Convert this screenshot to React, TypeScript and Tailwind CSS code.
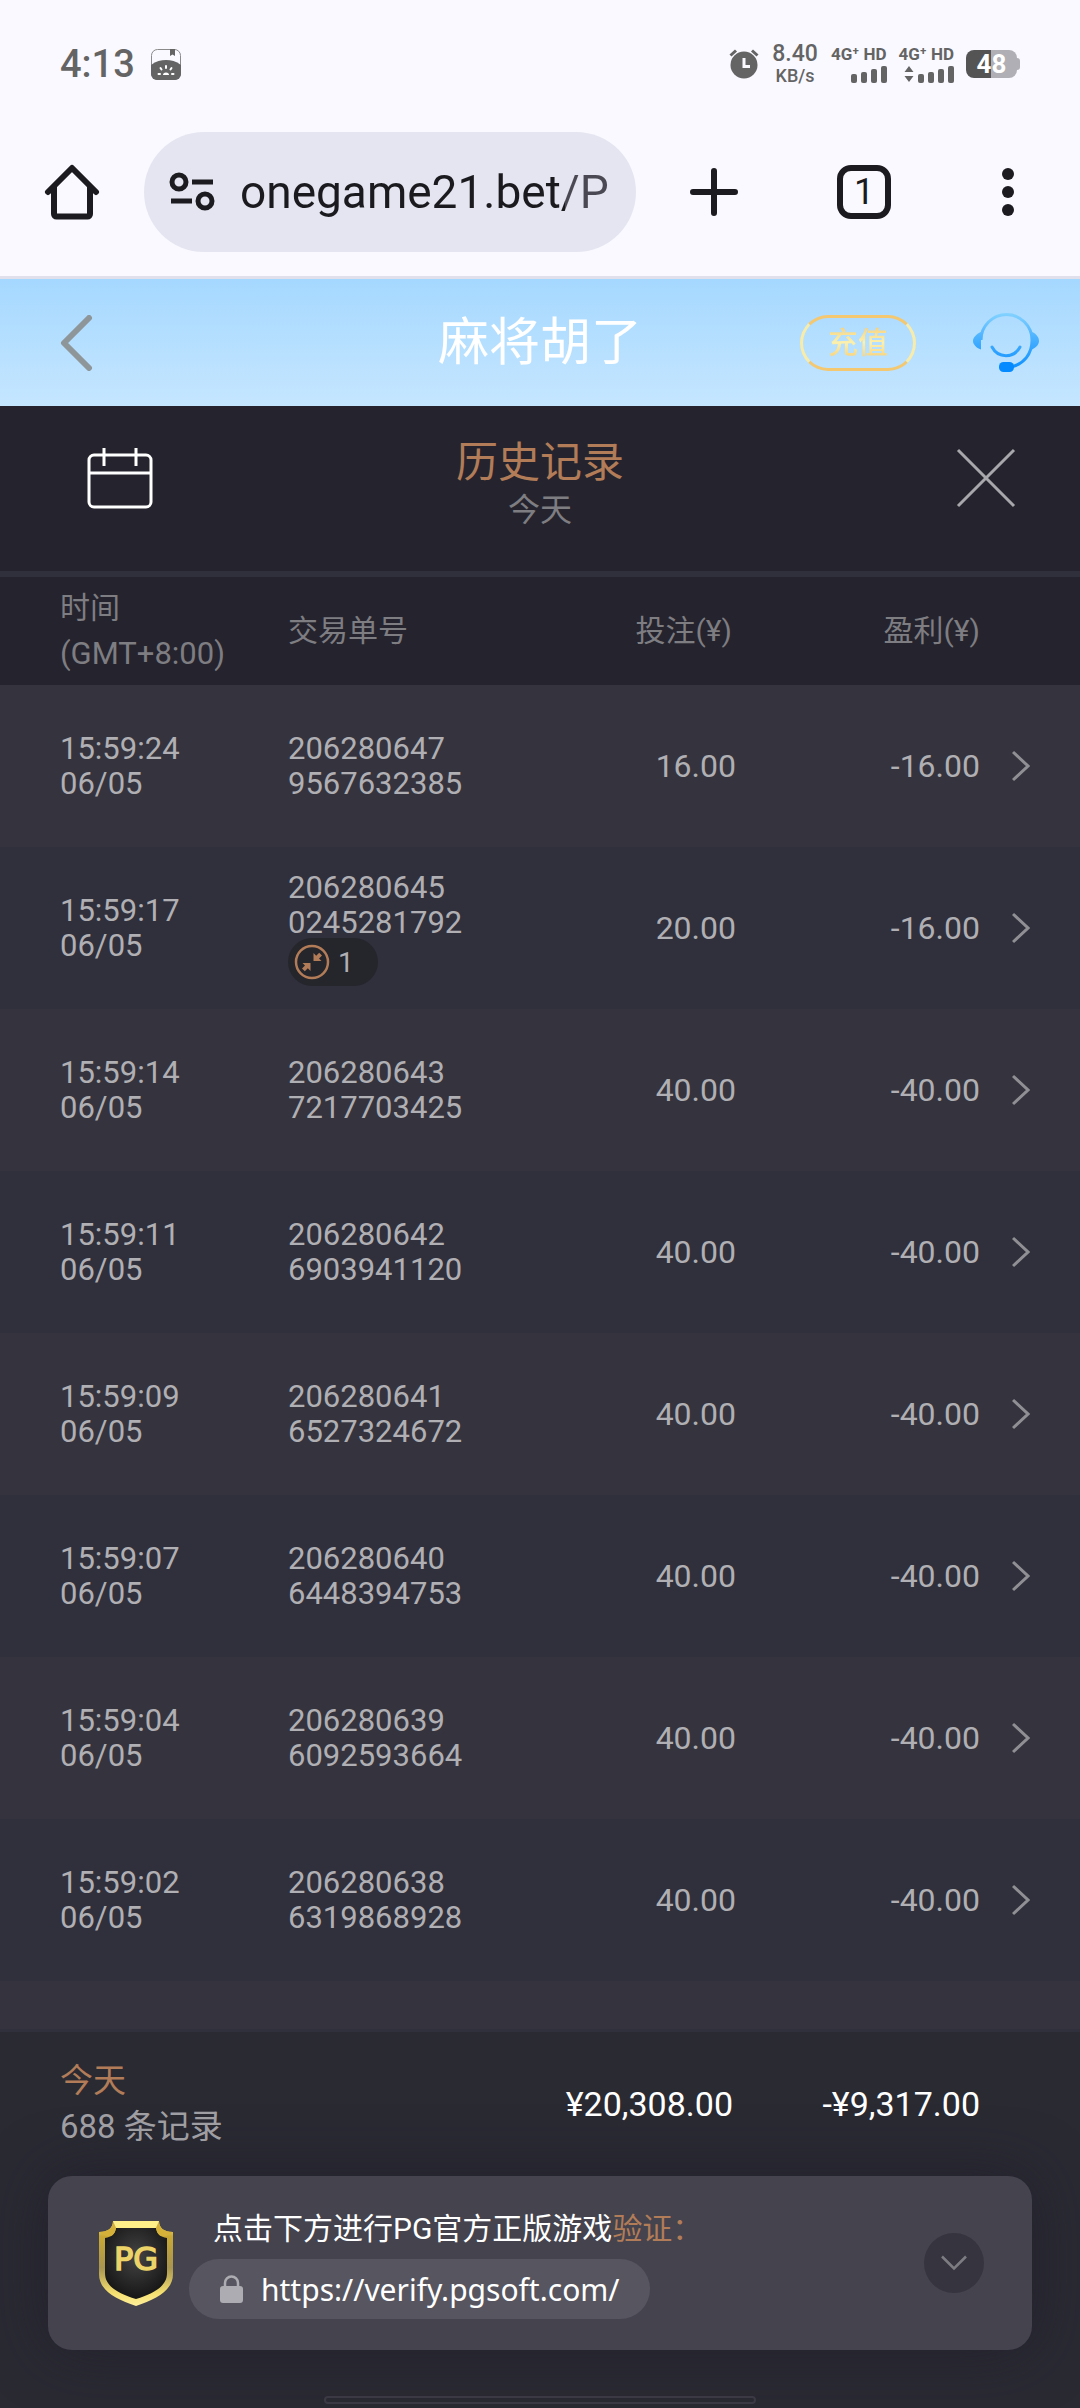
import React, { useState } from 'react';

interface BetRecord {
  time: string;
  date: string;
  id: [string, string];
  bet: string;
  profit: string;
  collapsed?: number;
}

const records: BetRecord[] = [
  { time: '15:59:24', date: '06/05', id: ['206280647', '9567632385'], bet: '16.00', profit: '-16.00' },
  { time: '15:59:17', date: '06/05', id: ['206280645', '0245281792'], bet: '20.00', profit: '-16.00', collapsed: 1 },
  { time: '15:59:14', date: '06/05', id: ['206280643', '7217703425'], bet: '40.00', profit: '-40.00' },
  { time: '15:59:11', date: '06/05', id: ['206280642', '6903941120'], bet: '40.00', profit: '-40.00' },
  { time: '15:59:09', date: '06/05', id: ['206280641', '6527324672'], bet: '40.00', profit: '-40.00' },
  { time: '15:59:07', date: '06/05', id: ['206280640', '6448394753'], bet: '40.00', profit: '-40.00' },
  { time: '15:59:04', date: '06/05', id: ['206280639', '6092593664'], bet: '40.00', profit: '-40.00' },
  { time: '15:59:02', date: '06/05', id: ['206280638', '6319868928'], bet: '40.00', profit: '-40.00' },
];

const SignalBars: React.FC = () => (
  <svg width="36" height="17" viewBox="0 0 36 17" fill="#646464">
    <rect x="0" y="8" width="6" height="9" rx="2" />
    <rect x="10" y="6" width="6" height="11" rx="2" />
    <rect x="20" y="3" width="6" height="14" rx="2" />
    <rect x="30" y="0" width="6" height="17" rx="2" />
  </svg>
);

const StatusBar: React.FC = () => (
  <div className="flex h-32 items-center justify-between pl-15 pr-15 text-[#646464]">
    <div className="flex items-center gap-4">
      <span className="text-[38px] leading-10 font-medium">4:13</span>
      <svg width="30" height="31" viewBox="0 0 30 31">
        <rect x="0.5" y="0.5" width="29" height="30" rx="6" fill="none" stroke="#8a8a8a" />
        <path d="M19 0h5v7l-2.500-1.500L19 7z" fill="#646464" />
        <path d="M0 16C5 12 10 11 15 11s10 1 15 5v9a6 6 0 0 1-6 6H6a6 6 0 0 1-6-6z" fill="#646464" />
        <g stroke="#fff" strokeWidth="2" strokeLinecap="round">
          <path d="M15 17v2M9.500 19l1 1.500M20.500 19l-1 1.500M7.500 25h1.500M21 25h1.500" />
        </g>
        <path d="M12 26a3 2.500 0 0 1 6 0z" fill="#fff" />
      </svg>
    </div>
    <div className="flex items-center">
      <svg width="30" height="30" viewBox="0 0 30 30" fill="none" stroke="#646464">
        <circle cx="15" cy="16" r="13.500" fill="#646464" stroke="none" />
        <path d="M1.500 6.500 7 1.500M28.500 6.500 23 1.500" strokeWidth="3" />
        <path d="M15 9v8.500h6" stroke="#f9f9ff" strokeWidth="3" />
      </svg>
      <div className="ml-3 flex w-12 flex-col items-center font-medium">
        <span className="text-[23px] leading-6">8.40</span>
        <span className="text-[18px] leading-5">KB/s</span>
      </div>
      <div className="ml-3 flex flex-col items-end gap-1 pr-1">
        <span className="text-[17px] leading-4 font-bold">4G⁺ HD</span>
        <SignalBars />
      </div>
      <div className="ml-2 flex flex-col items-end gap-1 pr-1">
        <span className="text-[17px] leading-4 font-bold">4G⁺ HD</span>
        <div className="flex items-center gap-1">
          <svg width="10" height="16" viewBox="0 0 10 16" fill="#646464">
            <path d="M5 0 9.500 6H.5zM5 16 .5 10h9z" />
          </svg>
          <SignalBars />
        </div>
      </div>
      <div className="ml-2 flex items-center">
        <div className="h-7 w-[51px] rounded-lg bg-linear-to-r from-[#545454] from-50% to-[#b0afb5] to-50% text-center text-[26px] leading-7 font-bold text-white">
          48
        </div>
        <div className="h-3 w-[3px] rounded-r bg-[#b0afb5]" />
      </div>
    </div>
  </div>
);

const BrowserBar: React.FC = () => {
  const [url, setUrl] = useState('onegame21.bet/P');

  return (
    <div className="flex h-[151px] items-start border-b-3 border-[#dfe0ec] pt-1 pr-[66px] pl-11 text-[#1b1b1f]">
      <button aria-label="Home" className="flex h-30 items-center">
        <svg width="56" height="56" viewBox="0 0 56 56" fill="none" stroke="#1b1b20" strokeWidth="6">
          <path d="M4 28 28 4l24 24" strokeLinecap="round" strokeLinejoin="round" />
          <path d="M10 22v28a2.500 2.500 0 0 0 2.500 2.500h31A2.500 2.500 0 0 0 46 50V22" />
        </svg>
      </button>
      <div className="ml-11 flex h-30 min-w-0 flex-1 items-center rounded-full bg-[#e4e5f0] pl-6">
        <svg width="48" height="42" viewBox="0 0 48 42" fill="none" stroke="#1b1b20" strokeWidth="5" className="shrink-0">
          <circle cx="11" cy="11" r="7" />
          <path d="M24 11h21M3 30h21" />
          <circle cx="37" cy="30" r="7" />
        </svg>
        <input
          type="text"
          aria-label="Address"
          value={url}
          onChange={(e) => setUrl(e.target.value)}
          className="ml-6 min-w-0 flex-1 bg-linear-to-r from-[#1b1b1f] from-82% to-[#4a4953] to-82% bg-clip-text text-[46px] leading-14 text-transparent outline-none"
        />
      </div>
      <div className="ml-[54px] flex h-30 items-center gap-[99px]">
        <button aria-label="New tab">
          <svg width="48" height="48" viewBox="0 0 48 48" stroke="#1b1b20" strokeWidth="6" strokeLinecap="round">
            <path d="M24 3v42M3 24h42" />
          </svg>
        </button>
        <button aria-label="Tabs" className="size-[54px] rounded-[14px] border-6 border-[#1b1b20] text-center text-[36px] leading-[42px]">
          1
        </button>
        <button aria-label="Menu" className="pl-3">
          <svg width="12" height="48" viewBox="0 0 12 48" fill="#1b1b20">
            <circle cx="6" cy="6" r="6" />
            <circle cx="6" cy="24" r="6" />
            <circle cx="6" cy="42" r="6" />
          </svg>
        </button>
      </div>
    </div>
  );
};

const GameHeader: React.FC = () => (
  <header className="grid h-[127px] grid-cols-[1fr_auto_1fr] items-center bg-linear-to-b from-[#a5d8ff] to-[#c5e6ff] px-10">
    <button aria-label="返回" className="ml-5 justify-self-start">
      <svg width="34" height="56" viewBox="0 0 34 56" fill="none" stroke="#8f9699" strokeWidth="6" strokeLinecap="round" strokeLinejoin="round">
        <path d="M29 3 4 28l25 25" />
      </svg>
    </button>
    <h1 className="text-[51px] leading-16 text-white">麻将胡了</h1>
    <div className="flex items-center justify-end gap-14">
      <button className="h-14 w-[116px] rounded-full border-3 border-x-[#f8ecaa] border-y-[#f3c871]">
        <span className="bg-linear-to-b from-[#f6cf78] via-[#fbf0ae] to-[#f6cf78] bg-clip-text text-[30px] leading-10 font-medium text-transparent">充值</span>
      </button>
      <button aria-label="客服">
        <svg width="68" height="62" viewBox="0 0 68 62" fill="none">
          <defs>
            <linearGradient id="headset" x1="0" y1="0" x2="0" y2="62" gradientUnits="userSpaceOnUse">
              <stop offset="0" stopColor="#86d4ff" />
              <stop offset="0.500" stopColor="#3fabff" />
              <stop offset="1" stopColor="#058bff" />
            </linearGradient>
          </defs>
          <path d="M9 28a25.500 25.500 0 0 1 51 0c0 14-8 24-21 27" stroke="url(#headset)" strokeWidth="3" />
          <path d="M9 20v17.500C4 36 1 32 1 29s3-7 8-9zM60 20v17.500c5-2.500 7-5.500 7-8.500s-2-7-7-9z" fill="url(#headset)" />
          <path d="M20 35c6 11.500 22 11.500 28 0" stroke="url(#headset)" strokeWidth="3" strokeLinecap="round" />
          <rect x="27" y="50" width="15" height="10" rx="4.500" fill="#058bff" />
        </svg>
      </button>
    </div>
  </header>
);

const HistoryTitle: React.FC = () => (
  <div className="grid grid-cols-[1fr_auto_1fr] items-start border-b-6 border-[#30303c] px-16 pt-8 pb-[39px]">
    <button aria-label="选择日期" className="ml-[22px] flex h-20 items-center justify-self-start">
      <svg width="68" height="62" viewBox="0 0 68 62" fill="none" stroke="#fff" strokeWidth="3">
        <rect x="3" y="8" width="62" height="52" rx="5" />
        <path d="M3 26h62M18 1v18M50 1v18" />
      </svg>
    </button>
    <div className="text-center">
      <h2 className="text-[42px] leading-[50px] text-[#b17c57]">历史记录</h2>
      <p className="text-[32px] leading-11 text-[#7e7d82]">今天</p>
    </div>
    <button aria-label="关闭" className="flex h-20 items-center justify-self-end">
      <svg width="60" height="60" viewBox="0 0 60 60" stroke="#a8a7ab" strokeWidth="3">
        <path d="M2 2l56 56M58 2 2 58" />
      </svg>
    </button>
  </div>
);

const RecordTable: React.FC = () => (
  <table className="w-full table-fixed border-collapse text-[31px] leading-[35px] text-[#b0afb3]">
    <colgroup>
      <col className="w-[288px]" />
      <col />
      <col className="w-[200px]" />
      <col className="w-[244px]" />
      <col className="w-[100px]" />
    </colgroup>
    <thead>
      <tr className="h-27 text-[30px] leading-[46px] text-[#7e7d82]">
        <th className="pl-15 text-left font-normal">
          时间
          <br />
          <span className="text-[31px]">(GMT+8:00)</span>
        </th>
        <th className="text-left font-normal">交易单号</th>
        <th className="pr-1 text-right font-normal">投注(¥)</th>
        <th className="text-right font-normal">盈利(¥)</th>
        <th aria-label="详情" />
      </tr>
    </thead>
    <tbody>
      {records.map((record) => (
        <tr key={record.time} className="h-[162px] odd:bg-[#35343e] even:bg-[#30303c]">
          <td className="pl-15">
            {record.time}
            <br />
            {record.date}
          </td>
          <td>
            {record.id[0]}
            <br />
            {record.id[1]}
            {record.collapsed && (
              <div className="-mt-0.5 flex h-12 w-[90px] items-center gap-2 rounded-full bg-[#25252c] pl-[6px] text-[28px]">
                <svg width="36" height="36" viewBox="0 0 36 36" fill="#b17c57">
                  <circle cx="18" cy="18" r="16" fill="none" stroke="#b17c57" strokeWidth="2.500" />
                  <path d="M19.500 9v8h8l-2.500-2.500 3-3-2.800-2.800-3 3zM16.500 27v-8h-8l2.500 2.500-3 3 2.800 2.800 3-3z" />
                </svg>
                {record.collapsed}
              </div>
            )}
          </td>
          <td className="text-right text-[32px]">{record.bet}</td>
          <td className="text-right text-[32px]">{record.profit}</td>
          <td className="pl-8">
            <button aria-label="详情" className="block">
              <svg width="18" height="32" viewBox="0 0 18 32" fill="none" stroke="#8f8f94" strokeWidth="3">
                <path d="M1 2l15 14L1 30" />
              </svg>
            </button>
          </td>
        </tr>
      ))}
    </tbody>
  </table>
);

const Shield: React.FC = () => (
  <svg width="76" height="86" viewBox="0 0 76 86" className="shrink-0">
    <defs>
      <linearGradient id="gold" x1="0" y1="0" x2="0" y2="1">
        <stop offset="0" stopColor="#fbf08a" />
        <stop offset="0.180" stopColor="#c9a834" />
        <stop offset="0.550" stopColor="#a8954f" />
        <stop offset="0.850" stopColor="#f5e071" />
        <stop offset="1" stopColor="#fff09a" />
      </linearGradient>
      <radialGradient id="core" cx="0.5" cy="0.4" r="0.6">
        <stop offset="0" stopColor="#444" />
        <stop offset="1" stopColor="#161616" />
      </radialGradient>
    </defs>
    <path d="M15 1h46c0 7 5 11 14 11v42c0 16-16 25-37 32C17 79 1 70 1 54V12c9 0 14-4 14-11z" fill="url(#gold)" />
    <path d="M18 8h40c1 6 4 9 11 10v35c0 13-12 20-31 26C19 73 7 66 7 53V18c7-1 10-4 11-10z" fill="url(#core)" />
    <path d="M15 1h46l-3 7H18z" fill="#fff08a" />
    <path d="M15 1l3 7c-1 6-4 9-10 8L1 12c9 0 14-4 14-11zM61 1l-3 7c1 6 4 9 10 8l7-4c-9 0-14-4-14-11z" fill="#d5b13a" />
    <text x="38" y="50" textAnchor="middle" fontFamily="DejaVu Sans" fontSize="32" fill="#edd468" stroke="#edd468" strokeWidth="1.500">
      PG
    </text>
  </svg>
);

const VerifyCard: React.FC = () => (
  <div className="mx-12 flex h-[174px] items-center rounded-3xl bg-[#44434e] pr-12 pl-[50px] shadow-[0_0_60px_rgba(30,28,40,0.6)]">
    <Shield />
    <div className="ml-[15px] flex-1">
      <p className="pl-6 text-[30px] leading-11 text-white">
        点击下方进行PG官方正版游戏<span className="text-[#b17c57]">验证：</span>
      </p>
      <a href="https://verify.pgsoft.com/" className="mt-2 flex h-15 w-[461px] items-center gap-[18px] rounded-full bg-[#575660] pl-[31px] font-['Noto_Sans'] text-[30px] text-white">
        <svg width="23" height="28" viewBox="0 0 23 28">
          <rect x="0" y="11" width="23" height="17" rx="3" fill="#adacb2" />
          <path d="M5 12V8a6.500 6.500 0 0 1 13 0v4" fill="none" stroke="#adacb2" strokeWidth="2.500" />
        </svg>
        https://verify.pgsoft.com/
      </a>
    </div>
    <button aria-label="收起" className="flex size-15 items-center justify-center rounded-full bg-[#36353f]">
      <svg width="26" height="16" viewBox="0 0 26 16" fill="none" stroke="#7d7c83" strokeWidth="2.500">
        <path d="M1 1.500l12 12 12-12" />
      </svg>
    </button>
  </div>
);

const Summary: React.FC = () => (
  <footer className="bg-[#2a2a33] pt-[26px] pb-1">
    <div className="flex items-center pr-[100px] pl-15 text-[34px] leading-[46px]">
      <div className="flex-1 text-[33px] text-[#9f9ea3]">
        <p className="text-[#b17c57]">今天</p>
        <p>688 条记录</p>
      </div>
      <p className="text-right text-white">¥20,308.00</p>
      <p className="w-[247px] text-right text-white">-¥9,317.00</p>
    </div>
    <div className="pt-[26px] pb-[46px]">
      <VerifyCard />
    </div>
    <div className="mx-auto h-2 w-2/5 rounded-full border-2 border-[#3b3a44]" />
  </footer>
);

const App: React.FC = () => (
  <div className="bg-[#f9f9ff] font-[Roboto,'Noto_Sans_CJK_SC',sans-serif]">
    <StatusBar />
    <BrowserBar />
    <GameHeader />
    <main className="bg-[#25242e]">
      <HistoryTitle />
      <RecordTable />
      <div className="h-[51px] border-b-3 border-[#30303c] bg-[#35343e]" />
      <Summary />
    </main>
  </div>
);

export default App;
